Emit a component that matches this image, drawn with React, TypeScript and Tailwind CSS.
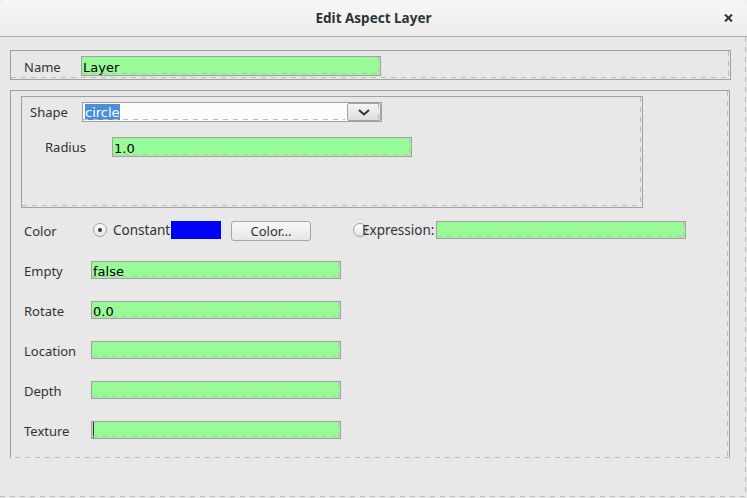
import React from "react";

const DH =
  "pointer-events-none absolute h-px bg-[image:repeating-linear-gradient(90deg,#bdbdbd_0_5px,transparent_5px_10px)]";
const DV =
  "pointer-events-none absolute w-px bg-[image:repeating-linear-gradient(180deg,#bdbdbd_0_5px,transparent_5px_10px)]";

function Dash() {
  return (
    <>
      <div className={`${DH} bottom-[1px] left-0 right-[1px]`} />
      <div className={`${DV} right-[1px] top-0 bottom-[1px]`} />
    </>
  );
}

function Field({
  w,
  value,
  caret,
}: {
  w: string;
  value?: string;
  caret?: boolean;
}) {
  return (
    <div
      className={`relative flex h-[18px] shrink-0 items-start border border-[#a0a0a0] bg-[#98fb98] ${w}`}
    >
      {caret && <div className="ml-[1px] h-[16px] w-px bg-[#7a007a]" />}
      {value && (
        <span className="pl-[1px] pt-[2px] font-['DejaVu_Sans',sans-serif] text-[13px] leading-[16px] text-black">
          {value}
        </span>
      )}
      <Dash />
    </div>
  );
}

function Radio({ checked }: { checked?: boolean }) {
  return (
    <div className="mt-[2px] flex h-[14px] w-[14px] shrink-0 items-center justify-center rounded-full border border-[#a2a2a2] bg-[linear-gradient(#ffffff,#e4e4e4)]">
      {checked && <div className="h-[4px] w-[4px] rounded-full bg-[#2e3436]" />}
    </div>
  );
}

function Row({ label, value, caret }: { label: string; value?: string; caret?: boolean }) {
  return (
    <div className="mt-[20px] flex h-[20px] items-start pl-[13px]">
      <div className="w-[67px] leading-[21px]">{label}</div>
      <Field w="w-[250px]" value={value} caret={caret} />
    </div>
  );
}

export default function App() {
  return (
    <div className="h-[498px] w-[747px] overflow-hidden bg-[#f0f0f0] font-['Noto_Sans',sans-serif] text-[13px] text-[#2e3436]">
      <div className="flex h-full flex-col overflow-hidden rounded-t-[7px] bg-[#e8e8e8]">
        <div className="grid h-[37px] shrink-0 grid-cols-[1fr_auto_1fr] items-center border-b border-[#b2b2b2] bg-[linear-gradient(#f7f7f7,#ededed)]">
          <div />
          <div className="text-[13.5px] font-bold text-[#2e3436]">Edit Aspect Layer</div>
          <div className="flex justify-end pr-[14px]">
            <svg width="9" height="8" viewBox="0 0 9 8">
              <path d="M1 0.5 L8 7.5 M8 0.5 L1 7.5" stroke="#2e3436" strokeWidth="2" />
            </svg>
          </div>
        </div>

        <div className="relative flex-1 pl-[10px] pt-[13px]">
          <div className={`${DV} right-[1px] top-0 bottom-[1px]`} />
          <div className={`${DH} left-0 right-[1px] bottom-[1px]`} />

          {/* Name panel */}
          <div className="relative flex h-[30px] w-[721px] items-start border border-[#a0a0a0] pl-[13px] pt-[5px]">
            <div className="w-[57px] leading-[22px]">Name</div>
            <div className="relative flex h-[20px] w-[300px] items-start border border-[#a0a0a0] bg-[#98fb98]">
              <span className="pl-[1px] pt-[3px] font-['DejaVu_Sans',sans-serif] text-[13px] leading-[16px] text-black">
                Layer
              </span>
              <Dash />
            </div>
            <Dash />
          </div>

          {/* Main panel */}
          <div className="relative mt-[10px] flex h-[368px] w-[720px] flex-col border-x border-t border-[#a0a0a0] pt-[5px]">
            <div className={`${DH} bottom-0 left-[4px] right-[1px]`} />
            <div className={`${DV} right-[1px] top-0 bottom-0`} />

            {/* Shape panel */}
            <div className="relative ml-[10px] flex h-[112px] w-[622px] flex-col border border-[#a0a0a0] pl-[8px] pt-[5px]">
              <div className="flex h-[20px] items-start">
                <div className="w-[52px] leading-[20px]">Shape</div>
                <div className="relative flex h-[20px] w-[300px] items-center border border-[#a0a0a0] bg-[#fcfcfc]">
                  <span className="ml-[2px] h-[16px] bg-[#4a90d9] font-['DejaVu_Sans',sans-serif] text-[13px] leading-[17px] text-white">
                    circle
                  </span>
                  <div className={`${DH} bottom-[1px] left-0 right-[36px]`} />
                  <div className="relative ml-auto flex h-[18px] w-[34px] items-center justify-center rounded-[2px] border border-[#a4a4a4] bg-[linear-gradient(#f4f4f4,#dedede)]">
                    <svg width="12" height="7" viewBox="0 0 12 7">
                      <path d="M1 1 L6 5.5 L11 1" stroke="#2e3436" strokeWidth="2" fill="none" />
                    </svg>
                    <div className={`${DV} right-[1px] top-0 bottom-[1px]`} />
                  </div>
                </div>
              </div>
              <div className="mt-[15px] flex h-[20px] items-start pl-[15px]">
                <div className="w-[67px] leading-[20px]">Radius</div>
                <div className="relative flex h-[20px] w-[300px] items-start border border-[#a0a0a0] bg-[#98fb98]">
                  <span className="pl-[1px] pt-[3px] font-['DejaVu_Sans',sans-serif] text-[13px] leading-[16px] text-black">
                    1.0
                  </span>
                  <Dash />
                </div>
              </div>
              <Dash />
            </div>

            {/* Color row */}
            <div className="mt-[13px] flex h-[20px] items-start pl-[13px]">
              <div className="w-[69px] leading-[20px]">Color</div>
              <Radio checked />
              <div className="ml-[6px] w-[58px] whitespace-nowrap text-[13.5px] leading-[19px]">
                Constant
              </div>
              <div className="h-[18px] w-[50px] bg-[#0000ff]" />
              <div className="ml-[10px] flex h-[20px] w-[80px] items-center justify-center rounded-[3px] border border-[#a6a6a6] bg-[linear-gradient(#f8f8f8,#e6e6e6)] leading-[18px]">
                Color...
              </div>
              <div className="ml-[42px]">
                <Radio />
              </div>
              <div className="relative -ml-[5px] w-[74px] whitespace-nowrap text-[13.5px] leading-[19px]">
                Expression:
              </div>
              <Field w="w-[250px]" />
            </div>

            <Row label="Empty" value="false" />
            <Row label="Rotate" value="0.0" />
            <Row label="Location" />
            <Row label="Depth" />
            <Row label="Texture" caret />
          </div>
        </div>
      </div>
    </div>
  );
}
